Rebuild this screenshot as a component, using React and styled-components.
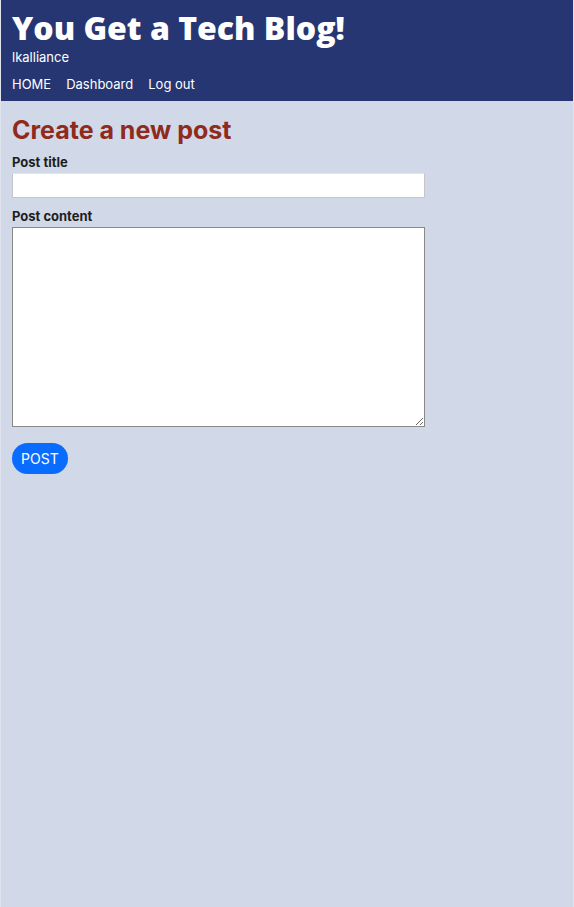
import React from 'react';
import styled, { createGlobalStyle } from 'styled-components';

const Global = createGlobalStyle`
  html, body {
    margin: 0;
    padding: 0;
    background: #d1d8e7;
  }
  body {
    font-family: Inter, "Liberation Sans", sans-serif;
    min-height: 907px;
    border-left: 1px solid #dfe4ee;
    border-right: 1px solid #dfe4ee;
    box-sizing: border-box;
  }
`;

const Header = styled.header`
  background: #263673;
  color: #fff;
  padding: 9px 11px 10px;
  height: 101px;
  box-sizing: border-box;
`;
const SiteTitle = styled.h1`
  font-family: "Open Sans", sans-serif;
  font-weight: 800;
  font-size: 32px;
  line-height: 38px;
  margin: 0;
`;
const User = styled.div`
  font-size: 13px;
  line-height: 18px;
  margin-top: 1px;
`;
const Nav = styled.nav`
  display: flex;
  gap: 15px;
  margin-top: 9px;
  font-size: 13px;
  line-height: 18px;
`;
const NavLink = styled.a`
  color: #fff;
  text-decoration: none;
`;
const Main = styled.main`
  padding: 14px 11px;
  width: 425px;
`;
const Heading = styled.h2`
  color: #8f2a1d;
  font-size: 25px;
  font-weight: 700;
  margin: 0 0 9px;
  line-height: 30px;
`;
const Form = styled.form`
  display: flex;
  flex-direction: column;
`;
const Label = styled.label`
  font-size: 13px;
  font-weight: 700;
  color: #1e1e1e;
  line-height: 16px;
  margin-bottom: 3px;
`;
const Input = styled.input`
  box-sizing: border-box;
  width: 413px;
  height: 25px;
  border: 1px solid #c4c6cc;
  border-top-color: #e6e6e6;
  background: #fff;
  margin: 0 0 10px;
`;
const TextArea = styled.textarea`
  box-sizing: border-box;
  width: 413px;
  height: 200px;
  border: 1px solid #8a8a8a;
  background: #fff;
  margin: 0;
`;
const Button = styled.button`
  align-self: flex-start;
  margin-top: 16px;
  background: #0a6cff;
  color: #fff;
  border: none;
  border-radius: 16px;
  height: 31px;
  padding: 0 9px;
  font-family: Inter, "Liberation Sans", sans-serif;
  font-size: 14px;
`;

export default function App() {
  return (
    <>
      <Global />
      <Header>
        <SiteTitle>You Get a Tech Blog!</SiteTitle>
        <User>lkalliance</User>
        <Nav>
          <NavLink href="#">HOME</NavLink>
          <NavLink href="#">Dashboard</NavLink>
          <NavLink href="#">Log out</NavLink>
        </Nav>
      </Header>
      <Main>
        <Heading>Create a new post</Heading>
        <Form onSubmit={(e) => e.preventDefault()}>
          <Label htmlFor="title">Post title</Label>
          <Input id="title" type="text" />
          <Label htmlFor="content">Post content</Label>
          <TextArea id="content" />
          <Button type="submit">POST</Button>
        </Form>
      </Main>
    </>
  );
}
